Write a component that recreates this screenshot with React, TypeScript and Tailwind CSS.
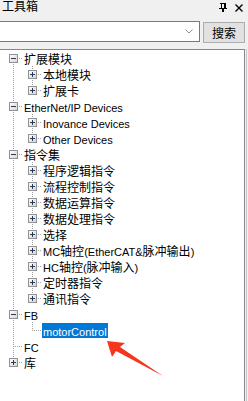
import React from 'react';

interface TreeRow {
  level: 0 | 1;
  label: string;
  box?: '+' | '-';
  first?: boolean;
  last?: boolean;
  selected?: boolean;
}

const rows: TreeRow[] = [
  { level: 0, label: '扩展模块', box: '-', first: true },
  { level: 1, label: '本地模块', box: '+' },
  { level: 1, label: '扩展卡', box: '+', last: true },
  { level: 0, label: 'EtherNet/IP Devices', box: '-' },
  { level: 1, label: 'Inovance Devices', box: '+' },
  { level: 1, label: 'Other Devices', box: '+', last: true },
  { level: 0, label: '指令集', box: '-' },
  { level: 1, label: '程序逻辑指令', box: '+' },
  { level: 1, label: '流程控制指令', box: '+' },
  { level: 1, label: '数据运算指令', box: '+' },
  { level: 1, label: '数据处理指令', box: '+' },
  { level: 1, label: '选择', box: '+' },
  { level: 1, label: 'MC轴控(EtherCAT&脉冲输出)', box: '+' },
  { level: 1, label: 'HC轴控(脉冲输入)', box: '+' },
  { level: 1, label: '定时器指令', box: '+' },
  { level: 1, label: '通讯指令', box: '+', last: true },
  { level: 0, label: 'FB', box: '-' },
  { level: 1, label: 'motorControl', last: true, selected: true },
  { level: 0, label: 'FC' },
  { level: 0, label: '库', box: '+', last: true },
];

const vDots = 'bg-[repeating-linear-gradient(to_bottom,#a0a0a0_0,#a0a0a0_1px,transparent_1px,transparent_2px)]';
const hDots = 'bg-[repeating-linear-gradient(to_right,#a0a0a0_0,#a0a0a0_1px,transparent_1px,transparent_2px)]';

// split a label into CJK and latin runs, latin is set a bit smaller like the UI font
function Label({ text }: { text: string }) {
  const parts = text.split(/([\u4e00-\u9fff]+)/).filter(Boolean);
  return (
    <>
      {parts.map((p, i) =>
        /[\u4e00-\u9fff]/.test(p) ? (
          <span key={i} className="text-[12px] font-['Noto_Sans_CJK_SC',sans-serif]">
            {p}
          </span>
        ) : (
          <span key={i} className="text-[11px] font-['Liberation_Sans','Noto_Sans_CJK_SC',sans-serif]">
            {p}
          </span>
        ),
      )}
    </>
  );
}

function ExpandBox({ sign }: { sign: '+' | '-' }) {
  return (
    <svg width="9" height="9" viewBox="0 0 9 9" className="block shrink-0 relative">
      <defs>
        <linearGradient id="boxfill" x1="0" y1="0" x2="1" y2="1">
          <stop offset="0" stopColor="#ffffff" />
          <stop offset="1" stopColor="#d4d4d4" />
        </linearGradient>
      </defs>
      <rect x="0.5" y="0.5" width="8" height="8" fill="url(#boxfill)" stroke="#919191" />
      <rect x="2" y="4" width="5" height="1" fill="#2a3a5a" />
      {sign === '+' && <rect x="4" y="2" width="1" height="5" fill="#2a3a5a" />}
    </svg>
  );
}

function Row({ row }: { row: TreeRow }) {
  const lineX = row.level === 0 ? 'left-[13px]' : 'left-[32px]';
  const ownTop = row.first ? 'top-[8px]' : 'top-0';
  const ownBottom = row.last ? 'bottom-[8px]' : 'bottom-0';
  return (
    <div className={`relative h-[16px] flex items-center ${row.level === 0 ? 'pl-[9px]' : 'pl-[28px]'}`}>
      {/* connector lines */}
      {row.level === 1 && <div className={`absolute left-[13px] top-0 bottom-0 w-[1px] ${vDots}`} />}
      <div className={`absolute ${lineX} ${ownTop} ${ownBottom} w-[1px] ${vDots}`} />
      <div
        className={`absolute top-[8px] h-[1px] w-[10px] ${hDots} ${row.level === 0 ? 'left-[13px]' : 'left-[32px]'}`}
      />
      {row.box ? <ExpandBox sign={row.box} /> : <div className="w-[9px] shrink-0" />}
      {row.selected ? (
        <span className="relative ml-[5px] px-[1px] whitespace-nowrap leading-[15px] h-[15px] bg-[#0078d7] text-white">
          <Label text={row.label} />
        </span>
      ) : (
        <span className="relative ml-[6px] whitespace-nowrap leading-[15px] h-[15px] text-black">
          <Label text={row.label} />
        </span>
      )}
    </div>
  );
}

export default function App() {
  return (
    <div className="relative w-[248px] h-[401px] overflow-hidden bg-[#f0f0f0] text-[12px] font-['Noto_Sans_CJK_SC','Noto_Sans',sans-serif]">
      {/* Title bar */}
      <div className="h-[21px] flex items-start justify-between">
        <span className="ml-[2px] text-[12px] leading-[12px] text-black">工具箱</span>
        <div className="flex items-center gap-[8px] mt-[3px] mr-[5px]">
          <svg width="8" height="9" viewBox="0 0 8 9">
            <rect x="1" y="0" width="6" height="1" fill="#000" />
            <rect x="2" y="0" width="1" height="5" fill="#000" />
            <rect x="5" y="0" width="2" height="5" fill="#000" />
            <rect x="0" y="5" width="8" height="1" fill="#000" />
            <rect x="3" y="6" width="2" height="3" fill="#000" />
          </svg>
          <svg width="8" height="8" viewBox="0 0 8 8">
            <path d="M0.5 0.5 L7.5 7.5 M7.5 0.5 L0.5 7.5" stroke="#000" strokeWidth="1.4" />
          </svg>
        </div>
      </div>

      {/* Search row */}
      <div className="h-[22px] flex items-start">
        <div className="-ml-[1px] w-[201px] h-[21px] bg-white border border-[#7a7a7a] flex items-center justify-end pr-[6px]">
          <svg width="8" height="5" viewBox="0 0 8 5">
            <path d="M0.5 0.5 L4 4 L7.5 0.5" fill="none" stroke="#8a8a8a" strokeWidth="1" />
          </svg>
        </div>
        <button
          type="button"
          className="ml-[3px] mt-[1px] w-[42px] h-[21px] bg-[#e1e1e1] border border-[#adadad] text-[12px] leading-[19px] text-black"
        >
          搜索
        </button>
      </div>

      {/* Tree */}
      <div className="mt-[6px] flex">
        <div className="-ml-[1px] w-[246px] h-[360px] bg-white border border-b-0 border-[#828790]">
          {rows.map((row) => (
            <Row key={row.label} row={row} />
          ))}
        </div>
        <div className="ml-[1px] w-[1px] h-[360px] bg-[#c8c8c8]" />
      </div>

      {/* Annotation arrow */}
      <svg className="absolute left-0 top-0 pointer-events-none" width="248" height="401" viewBox="0 0 248 401">
        <polygon points="107,341 125,343 120,347 163,376 116,351 112,357" fill="#f4361c" />
      </svg>
    </div>
  );
}
